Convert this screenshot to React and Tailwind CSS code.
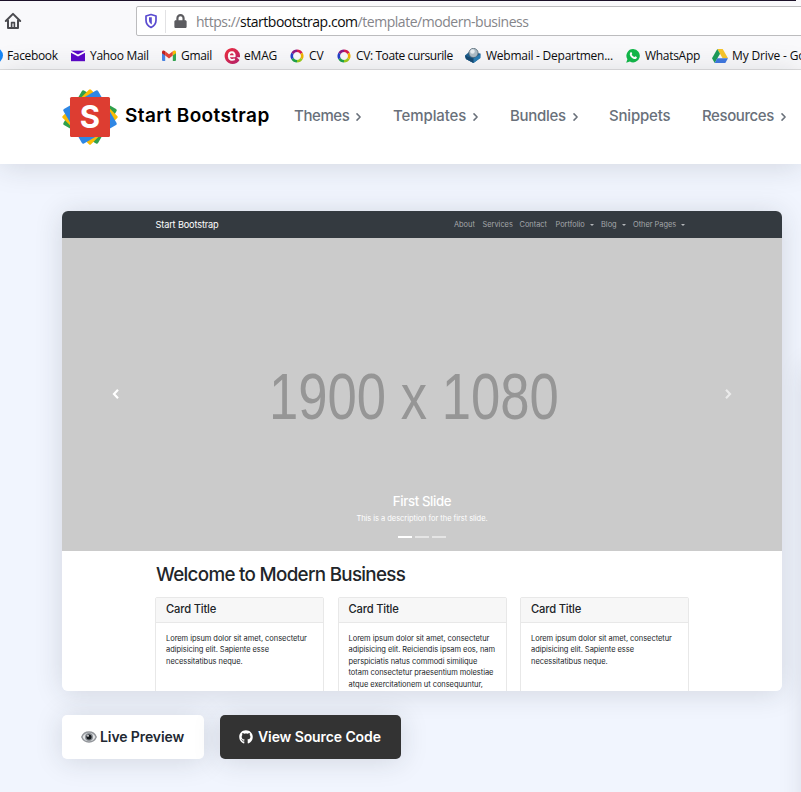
import React from "react";
import { FaGithub, FaLock } from "react-icons/fa";

const UI = "font-['Open_Sans','Noto_Sans',sans-serif]";

function HomeIcon() {
  return (
    <svg width="18" height="18" viewBox="0 0 18 18" fill="none" stroke="#4a4a4f" strokeWidth="2" strokeLinejoin="round" strokeLinecap="round">
      <path d="M1.8 9 9 1.9 16.2 9" />
      <path d="M4 8.5V16h10V8.5" />
      <path d="M7.6 16v-5.4h2.8V16" strokeWidth="1.6" />
    </svg>
  );
}

function ShieldIcon() {
  return (
    <svg width="14" height="16" viewBox="0 0 14 16">
      <path d="M7 1.500 12 3v4.200c0 3.400-1.800 5.600-5 7.200C3.800 12.800 2 10.600 2 7.200V3z" fill="none" stroke="#5a4bd0" strokeWidth="1.700" strokeLinejoin="round" />
      <path d="M7.800 4.300v7.200C5.800 10.300 5 9 5 7V4.300z" fill="#5a4bd0" />
    </svg>
  );
}

function YahooIcon() {
  return (
    <svg width="14" height="12" viewBox="0 0 14 12">
      <rect width="14" height="10.500" y=".7" fill="#5b08c9" />
      <path d="M0 .7 7 4.500 14 .7v2L7 6.500 0 2.700z" fill="#fff" />
    </svg>
  );
}

function GmailIcon() {
  return (
    <svg width="14" height="11" viewBox="0 0 14 11">
      <path d="M0 2h3.200v9H1a1 1 0 0 1-1-1z" fill="#4a86e8" />
      <path d="M10.800 2H14v8a1 1 0 0 1-1 1h-2.200z" fill="#34a853" />
      <path d="M3.200 1.300 7 4.200l3.800-2.900v4.200L7 8.400 3.200 5.500z" fill="#e6443a" />
      <path d="M10.800 1.300C12.200-.3 14 .4 14 1.900v1.300l-3.200 2.300z" fill="#fbbc04" />
      <path d="M3.200 1.300C1.800-.3 0 .4 0 1.900v1.300l3.200 2.300z" fill="#c5221f" />
    </svg>
  );
}

function EmagIcon() {
  return (
    <svg width="17" height="16" viewBox="0 0 17 16">
      <defs>
        <linearGradient id="emag" x1="0" y1="0" x2="1" y2="1">
          <stop offset="0" stopColor="#f0303c" />
          <stop offset="1" stopColor="#b8206f" />
        </linearGradient>
      </defs>
      <path d="M8 0a8 8 0 0 1 8 7.500v1.700H12.500l3 2.800A8 8 0 1 1 8 0z" fill="url(#emag)" />
      <path d="M5 8.300h5.700c.2-2.600-1-4-2.700-4-2 0-3.200 1.500-3.200 4 0 3.200 3 4.400 6 2.900" fill="none" stroke="#fff" strokeWidth="1.900" strokeLinejoin="round" />
    </svg>
  );
}

function RingIcon() {
  return (
    <svg width="14" height="14" viewBox="0 0 14 14" fill="none" strokeWidth="2.600">
      <path d="M7 1.800A5.200 5.200 0 0 1 11.500 4.400" stroke="#d61c4e" />
      <path d="M11.500 4.400A5.200 5.200 0 0 1 11.500 9.600" stroke="#f0b400" />
      <path d="M11.500 9.600A5.200 5.200 0 0 1 7 12.200" stroke="#9ccc1c" />
      <path d="M7 12.200A5.200 5.200 0 0 1 2.500 9.600" stroke="#1fa34a" />
      <path d="M2.500 9.600A5.200 5.200 0 0 1 2.500 4.400" stroke="#2340c8" />
      <path d="M2.500 4.400A5.200 5.200 0 0 1 7 1.800" stroke="#8a1a86" />
    </svg>
  );
}

function WebmailIcon() {
  return (
    <svg width="16" height="15" viewBox="0 0 16 15">
      <path d="M0 7.500 4 4l11.500 1.500-.5 4.500L8.500 15 1 11z" fill="#1d5f8f" />
      <circle cx="8.500" cy="5" r="4.600" fill="#aebdc7" stroke="#4f6472" strokeWidth=".8" />
      <circle cx="7.500" cy="3.500" r="2.200" fill="#e8eef2" />
      <path d="m0 7.500 8.500 3L15.500 6v4L8.500 15 1 11z" fill="#2b7db3" />
      <path d="m0 7.500 8.500 3V15L1 11z" fill="#174a72" />
    </svg>
  );
}

function WhatsAppIcon() {
  return (
    <svg width="14" height="14" viewBox="0 0 14 14">
      <path d="M7.200 0a6.700 6.700 0 1 1-3.300 12.600L.2 13.800l1.200-3.600A6.700 6.700 0 0 1 7.200 0z" fill="#12b84a" />
      <path d="M4.600 3.300c.5-.4.900-.2 1.100.3l.5 1.100c.1.400-.5.800-.5 1.100.5 1 1.400 1.800 2.500 2.300.4 0 .8-.9 1.200-.8l1.300.7c.5.300 0 1.700-1 2-2.600.7-6.200-2.600-5.900-5.200.1-.6.500-1.200.8-1.500z" fill="#fff" />
    </svg>
  );
}

function DriveIcon() {
  return (
    <svg width="16" height="14" viewBox="0 0 16 14">
      <path d="M5.300 0h5.400L16 9.300h-5.400z" fill="#f7c52b" />
      <path d="M5.300 0 8 4.700 2.700 14 0 9.300z" fill="#1c9c5a" />
      <path d="M5.300 9.300H16L13.300 14H2.700z" fill="#3f78e0" />
    </svg>
  );
}

function EyeIcon() {
  return (
    <svg width="16" height="12" viewBox="0 0 16 12">
      <path d="M8 1C4.500 1 2 3 .8 6 2 9 4.500 11 8 11s6-2 7.200-5C14 3 11.500 1 8 1z" fill="#e2e4e6" stroke="#92959a" strokeWidth="1.400" />
      <circle cx="8" cy="6" r="4" fill="#8b8f95" />
      <circle cx="8" cy="6" r="2.600" fill="#15181c" />
      <circle cx="7" cy="4.800" r=".9" fill="#fff" />
    </svg>
  );
}

function Logo() {
  return (
    <svg width="56" height="56" viewBox="0 0 56 56" className="shrink-0">
      <rect x="8" y="8" width="40" height="40" rx="1.500" fill="#30a04c" transform="rotate(30 28 28)" />
      <rect x="8" y="8" width="40" height="40" rx="1.500" fill="#fbbc05" transform="rotate(45 28 28)" />
      <rect x="8" y="8" width="40" height="40" rx="1.500" fill="#2f87e4" transform="rotate(60 28 28)" />
      <rect x="8" y="8" width="40" height="40" rx="1.500" fill="#dd3d31" />
      <text x="28" y="39.200" textAnchor="middle" fill="#fff" fontFamily="Inter" fontWeight="700" fontSize="31">S</text>
    </svg>
  );
}

function Bookmark({ icon, label, width, track }) {
  return (
    <div className={`flex shrink-0 items-center ${width}`}>
      <span className="flex w-[19px] shrink-0 items-center">{icon}</span>
      <span className={`whitespace-nowrap ${track}`}>{label}</span>
    </div>
  );
}

function NavItem({ label, width, arrow = true, track = "" }) {
  return (
    <div className={`flex shrink-0 items-center ${width}`}>
      <span className={`whitespace-nowrap ${track}`}>{label}</span>
      {arrow && (
        <svg className="ml-[7px] mt-px" width="5" height="8" viewBox="0 0 5 8" fill="none" stroke="#69707a" strokeWidth="1.500" strokeLinecap="round" strokeLinejoin="round">
          <path d="M1 .9 4.100 4 1 7.100" />
        </svg>
      )}
    </div>
  );
}

function SlideArrow({ d }) {
  return (
    <svg width="7" height="10" viewBox="0 0 7 10" fill="none" stroke="#fff" strokeWidth="2.200">
      <path d={d} />
    </svg>
  );
}

function DemoLink({ label, width, caret }) {
  return (
    <span className={`flex shrink-0 items-center whitespace-nowrap ${width}`}>
      {label}
      {caret && <span className="ml-[5px] border-x-[2.5px] border-t-[2.5px] border-x-transparent border-t-[#b3b6b9]" />}
    </span>
  );
}

function DemoCard({ lines }) {
  return (
    <div className="h-[110px] w-[169px] shrink-0 rounded-t-[2px] border border-[#e8e8e8] bg-white">
      <div className="flex h-[25px] items-center border-b border-[#e8e8e8] bg-[#f7f7f7] pl-[10px] text-[11.2px] font-medium tracking-[-0.18px] text-[#212529]">Card Title</div>
      <div className="pl-[10px] pt-[10px] text-[7.5px] leading-[11.6px] tracking-[-0.05px] text-[#212529]">
        {lines.map((line) => (
          <div key={line} className="whitespace-nowrap">{line}</div>
        ))}
      </div>
    </div>
  );
}

const shortText = ["Lorem ipsum dolor sit amet, consectetur", "adipisicing elit. Sapiente esse", "necessitatibus neque."];
const longText = ["Lorem ipsum dolor sit amet, consectetur", "adipisicing elit. Reiciendis ipsam eos, nam", "perspiciatis natus commodi similique", "totam consectetur praesentium molestiae", "atque exercitationem ut consequuntur,"];

export default function App() {
  return (
    <div className="relative flex h-[792px] w-[801px] flex-col overflow-hidden bg-[#f1f5fe] font-['Inter',sans-serif]">
      <div className={`flex h-[70px] shrink-0 flex-col border-b border-[#dededf] bg-[#f9f9fb] ${UI}`}>
        <div className="h-px w-[796px] shrink-0 bg-[#1b1028]" />
        <div className="mt-[5px] flex h-[30px] shrink-0">
          <div className="flex w-[136px] shrink-0 items-center pl-1"><HomeIcon /></div>
          <div className="flex w-[670px] shrink-0 items-center rounded-[2px] border border-[#bcbcbe] bg-white pl-[7px]">
            <ShieldIcon />
            <span className="ml-[7px] h-[23px] w-px bg-[#e2e2e4]" />
            <FaLock className="ml-2 h-[14px] w-[13px] text-[#5c5c60]" />
            <span className="ml-[9px] mt-px whitespace-nowrap text-[14px] tracking-[-0.47px] text-[#85858a]">
              https://<span className="text-[#0c0c0d]">startbootstrap.com</span>/template/modern-business
            </span>
          </div>
        </div>
        <div className="-ml-[12px] flex h-[33px] items-center pt-[6px] text-[12px] text-[#0c0c0d]">
          <Bookmark width="w-[83px]" icon={<span className="h-[15px] w-[15px] rounded-full bg-[#1686f5]" />} label="Facebook" track="tracking-[-0.35px]" />
          <Bookmark width="w-[91px]" icon={<YahooIcon />} label="Yahoo Mail" track="tracking-[-0.3px]" />
          <Bookmark width="w-[62px]" icon={<GmailIcon />} label="Gmail" track="tracking-[-0.3px]" />
          <Bookmark width="w-[66px]" icon={<EmagIcon />} label="eMAG" track="tracking-[-0.2px] pl-px" />
          <Bookmark width="w-[47px]" icon={<RingIcon />} label="CV" track="" />
          <Bookmark width="w-[128px]" icon={<RingIcon />} label="CV: Toate cursurile" track="tracking-[-0.4px]" />
          <Bookmark width="w-[161px]" icon={<WebmailIcon />} label="Webmail - Departmen..." track="tracking-[-0.25px] pl-[2px]" />
          <Bookmark width="w-[86px]" icon={<WhatsAppIcon />} label="WhatsApp" track="tracking-[-0.3px]" />
          <Bookmark width="w-[110px]" icon={<DriveIcon />} label="My Drive - Google" track="tracking-[-0.15px] pl-px" />
        </div>
      </div>

      <header className="z-10 flex h-[94px] shrink-0 items-center bg-white pl-[62px] text-[15px] font-medium text-[#69707a] shadow-[0_2px_28px_rgba(33,40,50,0.15)]">
        <Logo />
        <div className="mb-[2px] ml-[7px] w-[169px] shrink-0 whitespace-nowrap text-[19px] font-semibold tracking-[0.38px] text-black">Start Bootstrap</div>
        <div className="mb-[2px] flex">
          <NavItem label="Themes" width="w-[99px]" track="tracking-[-0.4px]" />
          <NavItem label="Templates" width="w-[117px]" track="tracking-[-0.1px]" />
          <NavItem label="Bundles" width="w-[99px]" track="tracking-[-0.3px]" />
          <NavItem label="Snippets" width="w-[93px]" arrow={false} track="tracking-[-0.2px]" />
          <NavItem label="Resources" width="w-[99px]" track="tracking-[-0.4px]" />
        </div>
      </header>

      <main className="flex flex-col pl-[62px] pt-[47px]">
        <section className="h-[480px] w-[720px] rounded-[6px] shadow-[0_2px_28px_rgba(33,40,50,0.15)]">
          <div className="flex h-full flex-col overflow-hidden rounded-[6px] bg-white">
            <div className="flex h-[27px] shrink-0 items-center bg-[#343a40] pl-[93.5px] text-[7.4px] text-[#a4a7aa]">
              <span className="w-[298.5px] shrink-0 text-[9.2px] tracking-[-0.15px] text-white">Start Bootstrap</span>
              <div className="flex pt-px">
                <DemoLink label="About" width="w-[28.5px]" />
                <DemoLink label="Services" width="w-[37px]" />
                <DemoLink label="Contact" width="w-[36px]" />
                <DemoLink label="Portfolio" width="w-[45.5px]" caret />
                <DemoLink label="Blog" width="w-[32px]" caret />
                <DemoLink label="Other Pages" width="w-[60px]" caret />
              </div>
            </div>
            <div className="relative flex h-[312.5px] shrink-0 flex-col items-center bg-[#cbcbcb] text-white">
              <div className="absolute left-[50px] top-[151px]"><SlideArrow d="M6 .8 2 5l4 4.200" /></div>
              <div className="absolute right-[50px] top-[151px] opacity-60"><SlideArrow d="M1 .8 5 5 1 9.200" /></div>
              <div className="mr-[17px] mt-[121px] flex h-[74px] scale-x-[0.81] items-center whitespace-nowrap font-['Liberation_Sans_Narrow','Liberation_Sans',sans-serif] text-[65px] leading-none text-[#969696]">
                <span className="font-['Liberation_Sans',sans-serif]">1900 x 1080</span>
              </div>
              <div className="mt-[58.5px] text-[13.2px] font-medium leading-[18px] tracking-[-0.35px]">First Slide</div>
              <div className="mt-[3px] text-[7.5px] leading-[12px] tracking-[-0.05px]">This is a description for the first slide.</div>
              <div className="mt-[11px] flex gap-[3px]">
                <span className="h-[2px] w-[14px] bg-white" />
                <span className="h-[2px] w-[14px] bg-white/50" />
                <span className="h-[2px] w-[14px] bg-white/50" />
              </div>
            </div>
            <div className="pl-[94px] pt-[11px]">
              <h1 className="h-[26px] text-[18.8px] font-medium leading-[26px] tracking-[-0.69px] text-[#212529]">Welcome to Modern Business</h1>
            </div>
            <div className="flex gap-[13.5px] pl-[93px] pt-[9px]">
              <DemoCard lines={shortText} />
              <DemoCard lines={longText} />
              <DemoCard lines={shortText} />
            </div>
          </div>
        </section>
        <div className="mt-6 flex gap-4 text-[14px] font-semibold tracking-[-0.1px]">
          <div className="flex h-[44px] w-[142px] items-center rounded-[5px] bg-white pl-[19px] text-[#212832] shadow-[0_2px_28px_rgba(33,40,50,0.15)]">
            <EyeIcon /><span className="mb-[2px] ml-[3px] whitespace-nowrap">Live Preview</span>
          </div>
          <div className="flex h-[44px] w-[181px] items-center rounded-[5px] bg-[#333] pl-[19px] text-white shadow-[0_2px_28px_rgba(33,40,50,0.15)]">
            <FaGithub size={14} /><span className="mb-[2px] ml-[5px] whitespace-nowrap">View Source Code</span>
          </div>
        </div>
      </main>
      <div className="absolute left-[806px] top-[365px] h-[500px] w-[40px] rounded-[6px] shadow-[0_2px_28px_rgba(33,40,50,0.15)]" />
    </div>
  );
}
